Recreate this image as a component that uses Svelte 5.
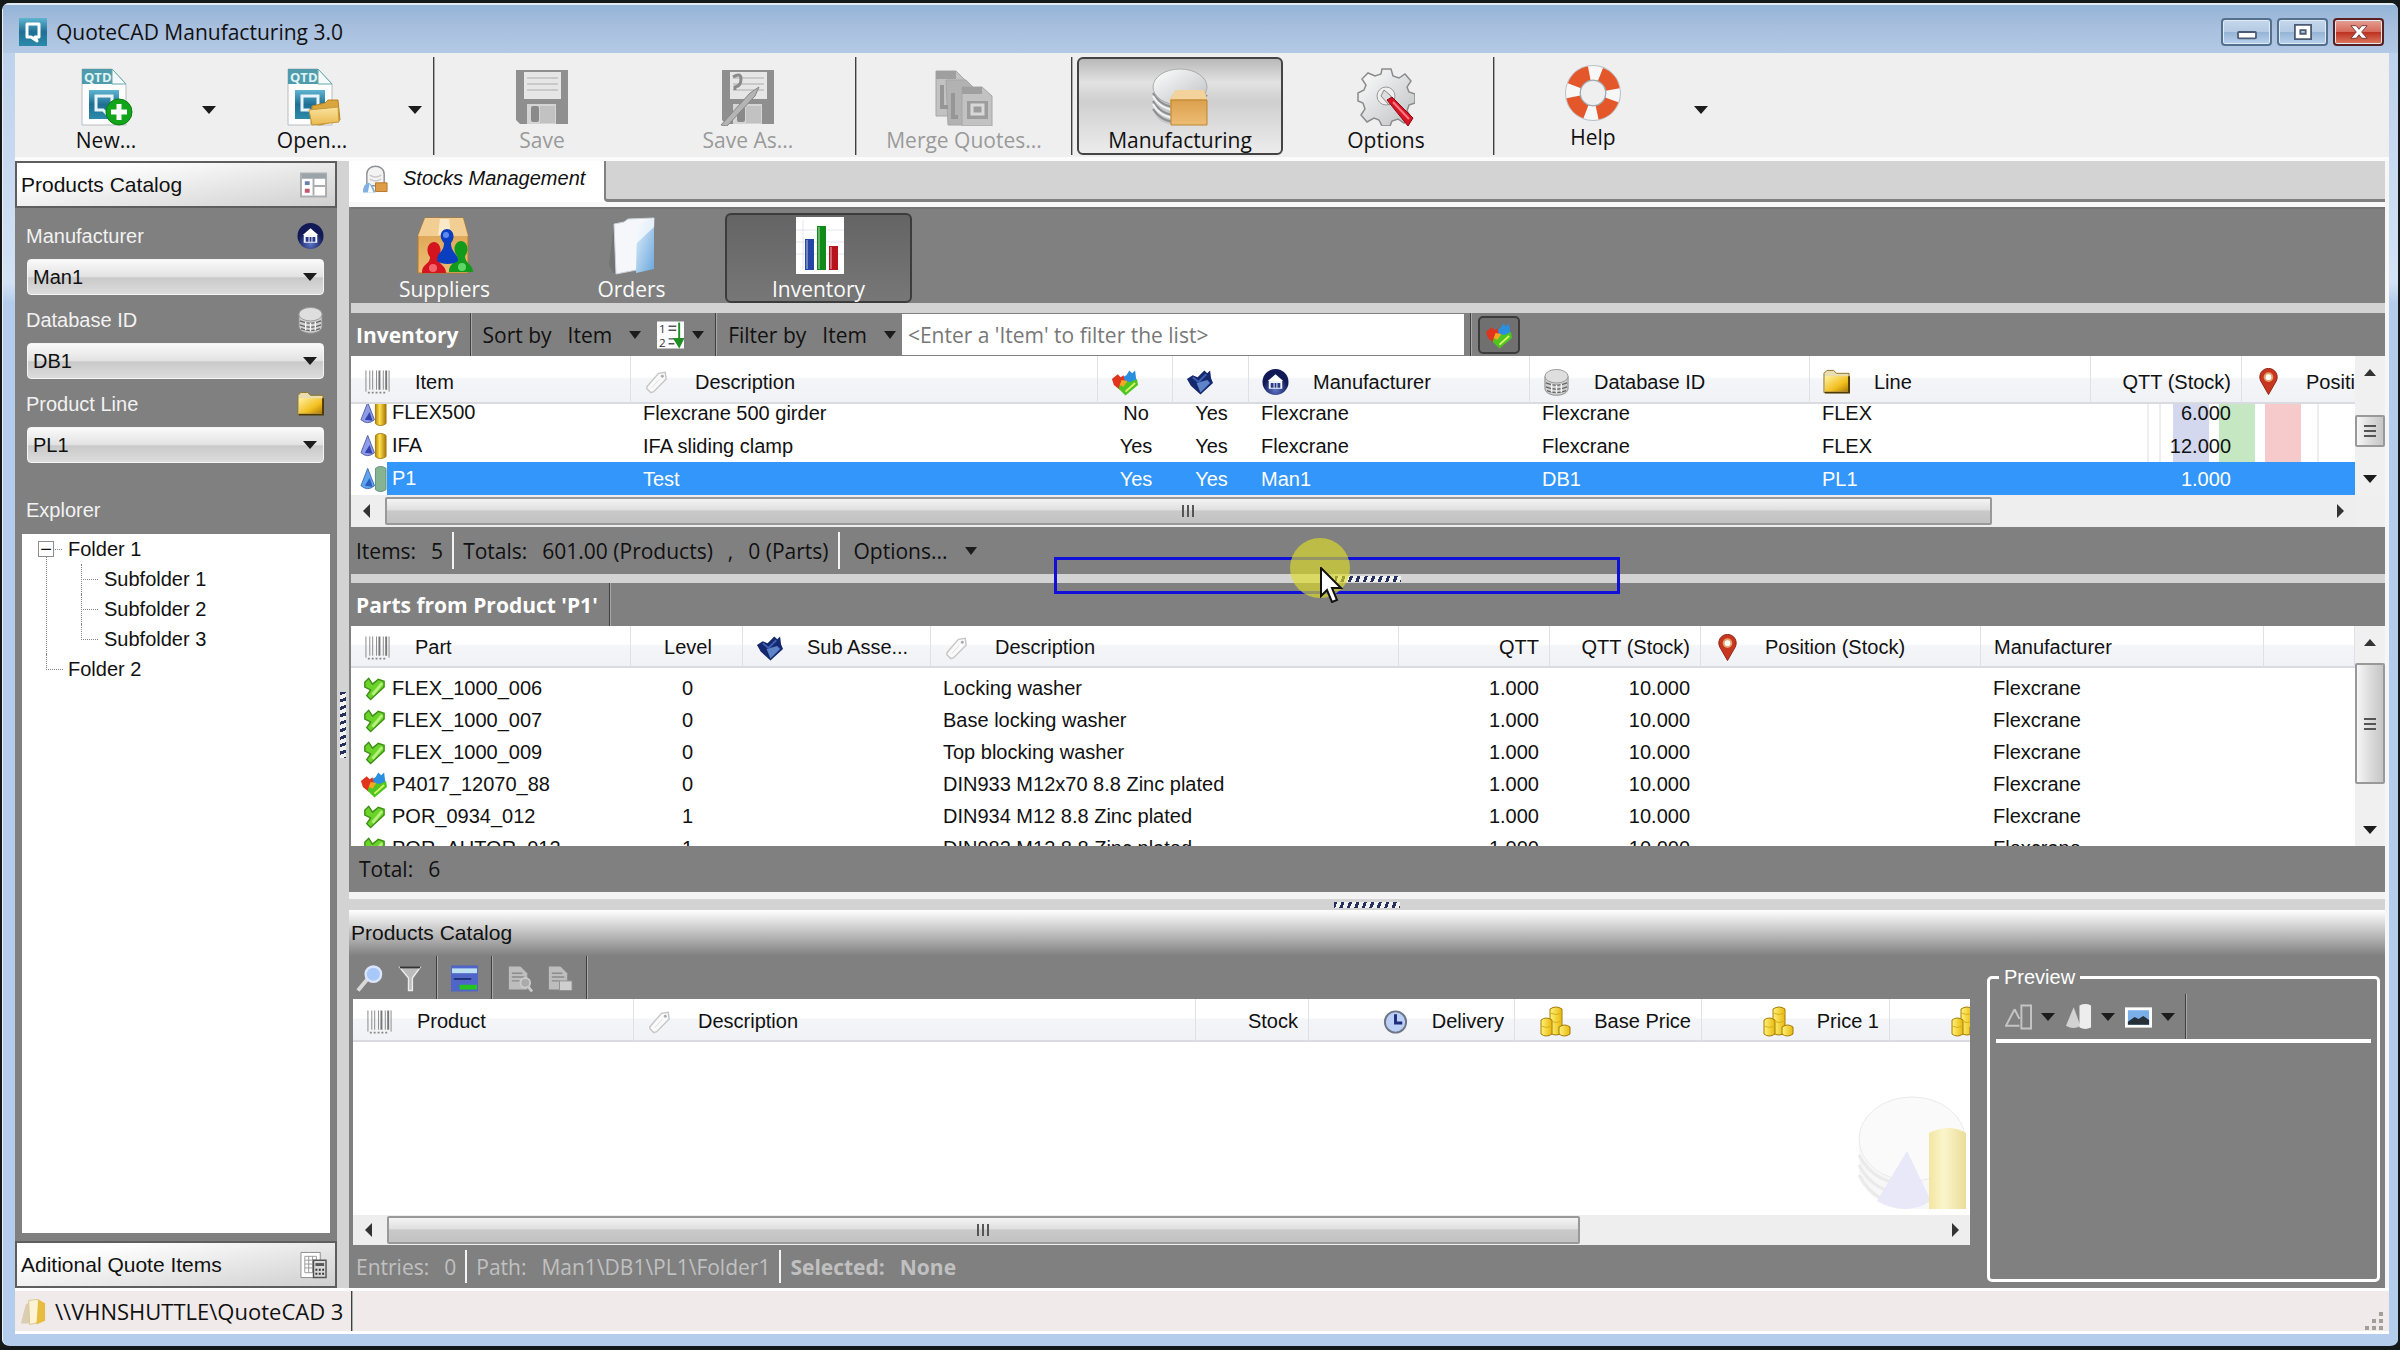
<script>
  import { onMount } from 'svelte';

  let manufacturer = 'Man1';
  let database = 'DB1';
  let productLine = 'PL1';
  let filter = '';
  let inventoryView;

  const fileTools = [
    { label: 'New...', icon: 'new' },
    { label: 'Open...', icon: 'open' }
  ];

  const subfolders = ['Subfolder 1', 'Subfolder 2', 'Subfolder 3'];

  const views = [
    { label: 'Suppliers', icon: 'suppliers' },
    { label: 'Orders', icon: 'orders' },
    { label: 'Inventory', icon: 'chart', active: true }
  ];

  const inventoryCols = [
    { label: 'Item', icon: 'barcode', width: 280 },
    { label: 'Description', icon: 'tag', width: 467 },
    { label: '', icon: 'cubes', width: 75, align: 'center' },
    { label: '', icon: 'blue', width: 76, align: 'center' },
    { label: 'Manufacturer', icon: 'home', width: 281 },
    { label: 'Database ID', icon: 'db', width: 280 },
    { label: 'Line', icon: 'folder', width: 281 },
    { label: 'QTT (Stock)', width: 151, align: 'right' },
    { label: 'Position (Stock)', icon: 'pin', width: 281 }
  ];

  const inventory = [
    ['FLEX500', 'Flexcrane 500 girder', 'No', 'Yes', 'Flexcrane', 'Flexcrane', 'FLEX', '6.000', ''],
    ['IFA', 'IFA sliding clamp', 'Yes', 'Yes', 'Flexcrane', 'Flexcrane', 'FLEX', '12.000', ''],
    ['P1', 'Test', 'Yes', 'Yes', 'Man1', 'DB1', 'PL1', '1.000', '']
  ];

  const partCols = [
    { label: 'Part', icon: 'barcode', width: 280 },
    { label: 'Level', width: 112, align: 'center' },
    { label: 'Sub Asse...', icon: 'blue', width: 188 },
    { label: 'Description', icon: 'tag', width: 468 },
    { label: 'QTT', width: 151, align: 'right' },
    { label: 'QTT (Stock)', width: 151, align: 'right' },
    { label: 'Position (Stock)', icon: 'pin', width: 280 },
    { label: 'Manufacturer', width: 283 },
    { label: '', width: 91 }
  ];

  const parts = [
    ['FLEX_1000_006', '0', 'Locking washer'],
    ['FLEX_1000_007', '0', 'Base locking washer'],
    ['FLEX_1000_009', '0', 'Top blocking washer'],
    ['P4017_12070_88', '0', 'DIN933 M12x70 8.8 Zinc plated'],
    ['POR_0934_012', '1', 'DIN934 M12 8.8 Zinc plated'],
    ['POR_AUTOR_012', '1', 'DIN982 M12 8.8 Zinc plated']
  ].map(([part, level, text]) => [part, level, '', text, '1.000', '10.000', '', 'Flexcrane', '']);

  const catalogCols = [
    { label: 'Product', icon: 'barcode', width: 281 },
    { label: 'Description', icon: 'tag', width: 562 },
    { label: 'Stock', width: 113, align: 'right' },
    { label: 'Delivery', icon: 'clock', width: 206, align: 'right' },
    { label: 'Base Price', icon: 'coins', width: 187, align: 'right' },
    { label: 'Price 1', icon: 'coins', width: 188, align: 'right' },
    { label: 'Price 2', icon: 'coins', width: 188, align: 'right' }
  ];

  const total = (cols) => cols.reduce((sum, c) => sum + c.width, 0);

  onMount(() => {
    inventoryView.scrollTop = inventoryView.scrollHeight;
  });
</script>

{#snippet page()}
  <path d="M5 1h30l14 15v41H5z" fill="#fdfdfd" stroke="#b9bcc0" />
  <path d="M5 1h30l14 15H5z" fill="#4f9bab" />
  <path d="M35 1v15h14z" fill="#f4fafb" stroke="#6aa" />
  <text x="7" y="14" font-size="13" font-weight="bold" fill="#dff3f6">QTD</text>
  <rect x="12" y="22" width="30" height="29" fill="url(#teal)" />
  <path d="M19 28h16v14h-4v5l-5-5h-7z" fill="none" stroke="#e8f4fa" stroke-width="3" />
{/snippet}

{#snippet floppy()}
  <path d="M3 2h52v54H7l-4-4z" fill="#8f8f8f" />
  <rect x="11" y="4" width="37" height="27" fill="#e6e6e6" />
  <path d="M14 10h31M14 16h31M14 22h31" stroke="#c9c9c9" stroke-width="2" />
  <rect x="14" y="36" width="29" height="20" fill="#d4d4d4" />
  <rect x="18" y="38" width="8" height="16" rx="2" fill="#8a8a8a" />
  <rect x="27" y="38" width="15" height="17" fill="#c2c2c2" />
{/snippet}

{#snippet icon(name)}
  {#if name === 'app'}
    <svg class="app-logo" viewBox="0 0 28 28" aria-hidden="true">
      <rect width="28" height="28" fill="url(#teal)" />
      <path d="M8 6h12v13h-4l2 4-6-4H8z" fill="none" stroke="#fff" stroke-width="3" stroke-linejoin="round" />
    </svg>
  {:else if name === 'new'}
    <svg class="big" viewBox="0 0 58 58" aria-hidden="true">
      {@render page()}
      <circle cx="42" cy="44" r="13" fill="#12a51c" stroke="#0a7d13" />
      <path d="M42 36v16M34 44h16" stroke="#fff" stroke-width="5" />
    </svg>
  {:else if name === 'open'}
    <svg class="big" viewBox="0 0 58 58" aria-hidden="true">
      {@render page()}
      <path d="M29 38l13-3 3-3h10l2 20-20 5-9-1z" fill="#d9a53c" stroke="#b98425" />
      <path d="M26 42l29-3 1 15-27 3z" fill="url(#folder)" stroke="#c6993a" />
    </svg>
  {:else if name === 'save'}
    <svg class="big" viewBox="0 0 58 58" aria-hidden="true">{@render floppy()}</svg>
  {:else if name === 'saveas'}
    <svg class="big" viewBox="0 0 58 58" aria-hidden="true">
      {@render floppy()}
      <path d="M14 9q8-5 8 2t-6 8v3" fill="none" stroke="#8a8a8a" stroke-width="3" />
      <path d="M2 57L31 25l9-6-4 9L8 58z" fill="#b4b4b4" stroke="#868686" />
    </svg>
  {:else if name === 'merge'}
    <svg class="big" viewBox="0 0 58 58" aria-hidden="true">
      <g fill="#c2c2c2" stroke="#a6a6a6">
        <path d="M1 3h20l9 9v36H1z" />
        <path d="M11 12h20l9 9v36H13z" fill="#b2b2b2" />
        <path d="M27 19h20l10 9v30H27z" />
      </g>
      <path d="M1 3h20v8H1zM27 19h20v7H27z" fill="#9f9f9f" />
      <path d="M7 17v22h6M18 25v24h5" fill="none" stroke="#969696" stroke-width="4" />
      <path d="M32 33h21v18H32z" fill="#9c9c9c" />
      <path d="M37 37h11v9H37z" fill="none" stroke="#d8d8d8" stroke-width="3" />
    </svg>
  {:else if name === 'stock'}
    <svg class="big" viewBox="0 0 58 58" aria-hidden="true">
      <path d="M3 18v25c2 9 11 14 24 14s27-4 28-12V17z" fill="#c3c5c6" />
      <path d="M2 25q8 15 27 14t27-12M2 33q8 15 27 14M2 41q9 14 27 13" fill="none" stroke="#8b8f91" stroke-width="2" />
      <path d="M2 28q8 15 27 14M2 36q8 15 27 14" fill="none" stroke="#f4f4f4" stroke-width="2" />
      <ellipse cx="29" cy="19" rx="27" ry="18" fill="url(#silver)" stroke="#a8acad" />
      <path d="M19 31l6-9h28l3 9v26H20z" fill="#e5b66c" />
      <path d="M20 32h36v25H20z" fill="url(#box)" stroke="#bd8530" />
      <path d="M19 31l6-9h28l3 9z" fill="#f3d29c" />
    </svg>
  {:else if name === 'clerk'}
    <svg class="small" viewBox="0 0 28 28" aria-hidden="true">
      <path d="M5 21V9c0-11 18-11 18 0v12z" fill="#f3f3f3" stroke="#8d9094" stroke-width="1.500" />
      <path d="M8 10q6 4 12 0M8 14q6 4 12 0" fill="none" stroke="#c8cacc" stroke-width="1.500" />
      <path d="M1 28q0-9 6-10l4 3 3 7z" fill="#7fb0e3" />
      <path d="M8 19l4 9h-6z" fill="#fff" />
      <path d="M14 18h12v9H14z" fill="#dd9c45" stroke="#b5772a" />
    </svg>
  {:else if name === 'gear'}
    <svg class="big" viewBox="0 0 58 58" aria-hidden="true">
      <path d="M25 1h9l2 7 6 2 6-4 6 7-4 6 2 5 6 2v9l-6 2-2 6 4 6-7 6-6-4-6 2-2 5h-8l-3-6-5-2-7 4-6-7 4-6-2-6-5-2v-8l6-3 2-5-4-6 6-6 7 3 6-2z" fill="url(#silver)" stroke="#8b8b8b" stroke-width="1.5" />
      <circle cx="29" cy="28" r="9" fill="#efefef" stroke="#999" />
      <path d="M27 22l6 5 5 7-6 3-8-9z" fill="#ddd" stroke="#888" />
      <path d="M30 32l5-3 21 21-5 8z" fill="#d81525" stroke="#8e0813" />
      <path d="M36 34l16 17" stroke="#f77b83" stroke-width="2" />
    </svg>
  {:else if name === 'help'}
    <svg class="big" viewBox="0 0 58 58" aria-hidden="true">
      <circle cx="29" cy="28" r="20" fill="none" stroke="#b9c0c6" stroke-width="16" />
      <circle cx="29" cy="28" r="20" fill="none" stroke="#f7f7f7" stroke-width="14" />
      <circle cx="29" cy="28" r="20" fill="none" stroke="#e4572a" stroke-width="14" stroke-dasharray="20 11.4" stroke-dashoffset="-7" />
      <circle cx="29" cy="28" r="13" fill="none" stroke="#9aa7b0" />
    </svg>
  {:else if name === 'suppliers'}
    <svg class="big" viewBox="0 0 58 58" aria-hidden="true">
      <path d="M2 19L9 1h38l5 18v37H2z" fill="url(#box)" stroke="#b27a2a" />
      <path d="M2 19L9 1h38l5 18z" fill="#f2ce93" />
      <path d="M24 2h9l2 16H22z" fill="#fae9c8" />
      <path d="M6 56c0-10 8-8 8-16-5-6-2-15 4-15s9 9 4 15c0 8 8 8 8 16z" fill="#d4141f" />
      <path d="M33 55c0-10 8-8 8-16-5-6-2-15 4-15s9 9 4 15c0 8 8 8 8 16z" fill="#129a1d" />
      <path d="M21 44c0-10 7-8 7-18-6-6-3-14 3-14s9 8 4 14c0 10 7 10 7 18-5 4-16 4-21 0z" fill="#0c3fc0" />
      <circle cx="30" cy="18" r="3" fill="#5f8cf0" />
      <circle cx="17" cy="51" r="4" fill="#f2656c" />
      <circle cx="46" cy="50" r="4" fill="#5fd767" />
    </svg>
  {:else if name === 'orders'}
    <svg class="big" viewBox="0 0 58 58" aria-hidden="true">
      <path d="M10 56l-4-8 5-42 14-1 5 4-5 46z" fill="#666" opacity=".5" />
      <path d="M11 7l10-2 4-3 26-1-2 49-36 7z" fill="#f5f7fa" stroke="#cbd2da" />
      <path d="M34 9l17-8v51l-18 4z" fill="url(#sky)" />
      <path d="M34 9l17-8v9L33 27z" fill="#fff" opacity=".7" />
    </svg>
  {:else if name === 'chart'}
    <svg class="big" viewBox="0 0 58 58" aria-hidden="true">
      <rect x="6" width="48" height="57" fill="#fff" />
      <path d="M13 3v50M6 13h48M6 25h48M6 37h48" stroke="#e3e3ee" />
      <rect x="15" y="22" width="9" height="31" fill="#2545a6" />
      <rect x="27" y="9" width="9" height="44" fill="#118a19" />
      <rect x="39" y="29" width="9" height="24" fill="#b7131d" />
      <path d="M17 23v29M29 10v42M41 30v22" stroke="#fff" stroke-width="2" opacity=".35" />
    </svg>
  {:else if name === 'barcode'}
    <svg class="small" viewBox="0 0 28 28" aria-hidden="true">
      <path d="M2 2v22M6 2v20M9 2v20M13 2v20M20 2v20M26 2v22" stroke="#888" stroke-width="1" />
      <path d="M16 2v20M23 2v20" stroke="#777" stroke-width="2" />
      <path d="M4 25h20" stroke="#888" stroke-width="2" stroke-dasharray="2 2" />
    </svg>
  {:else if name === 'tag'}
    <svg class="small" viewBox="0 0 28 28" aria-hidden="true">
      <path d="M3 19L15 5l7-1 1 7-13 13-3 1-4-4z" fill="#fafafa" stroke="#c6c6c6" stroke-width="1.5" />
      <circle cx="19" cy="8" r="1.500" fill="#aaa" />
      <path d="M8 20l8-9" stroke="#ddd" />
    </svg>
  {:else if name === 'cubes'}
    <svg class="small" viewBox="0 0 28 28" aria-hidden="true">
      <path d="M12 9l4-2 3-5 3 3 3-3 1 8 1 5-8 2-5-4z" fill="#2b8fe0" />
      <path d="M1 11l6-5 3 3 3-2 2 9-6 6L3 17z" fill="#e0341d" />
      <path d="M9 17l6-4 5 1 7-3 1 6-13 11-7-7z" fill="#4fc51f" />
      <path d="M11 12l6 1-4 6-4-2z" fill="#f5a623" />
      <path d="M15 24l10-9" stroke="#d6f36a" stroke-width="2" />
    </svg>
  {:else if name === 'blue'}
    <svg class="small" viewBox="0 0 28 28" aria-hidden="true">
      <path d="M1 11l6-4 5 2 7-7 3 3 3-3 1 8 2 5-13 12L5 18z" fill="#14286e" />
      <path d="M11 15l11-3 3 3-10 10z" fill="#5d83c8" />
      <path d="M7 9l6 5 8-8" fill="none" stroke="#3d5fb4" stroke-width="2" />
    </svg>
  {:else if name === 'home'}
    <svg class="small" viewBox="0 0 28 28" aria-hidden="true">
      <circle cx="14" cy="14" r="13.500" fill="url(#navy)" />
      <path d="M6 13l8-7 8 7z" fill="#fff" />
      <path d="M7 13h14v8H7z" fill="#f3f6ff" />
      <path d="M9 20v-5h3v5zM13 20v-5h2v5zM16 20v-5h3v5z" fill="#2a3a86" />
    </svg>
  {:else if name === 'db'}
    <svg class="small" viewBox="0 0 28 28" aria-hidden="true">
      <path d="M2 8v13c1 9 23 9 24 0V8z" fill="#cfcfcf" stroke="#8a8a8a" />
      <path d="M3 15q11 5 22 0M3 19q11 5 22 0M4 23q10 4 20 0" fill="none" stroke="#666" stroke-width="1.500" />
      <path d="M9 16v9M14 17v9M19 16v9" stroke="#f4f4f4" stroke-width="1.500" />
      <ellipse cx="14" cy="8" rx="12" ry="7" fill="#dedede" stroke="#999" />
    </svg>
  {:else if name === 'folder'}
    <svg class="small" viewBox="0 0 28 28" aria-hidden="true">
      <path d="M1 5l3-3h7l3 3h13v20H1z" fill="#e9dcae" stroke="#8d7327" />
      <path d="M2 8h25v16H2z" fill="url(#gold)" />
      <path d="M27 8v17H2" fill="none" stroke="#4d3a07" stroke-width="2" />
    </svg>
  {:else if name === 'pin'}
    <svg class="small" viewBox="0 0 28 28" aria-hidden="true">
      <path d="M14 27L6 13a9 9 0 1 1 16 0z" fill="#c9361f" stroke="#8d2213" />
      <circle cx="14" cy="9" r="4" fill="#fff" stroke="#e2a26a" stroke-width="2" />
    </svg>
  {:else if name === 'clock'}
    <svg class="small" viewBox="0 0 28 28" aria-hidden="true">
      <circle cx="14" cy="14" r="11" fill="#bcd0f7" stroke="#6e7687" stroke-width="2" />
      <path d="M14 6v9h7" fill="none" stroke="#1d2d7a" stroke-width="3" />
    </svg>
  {:else if name === 'coins'}
    <svg class="small coins" viewBox="0 0 31 31" aria-hidden="true">
      <g fill="url(#coin)" stroke="#a47a05">
        <path d="M10 3q6-4 12 0v24q-6 4-12 0z" />
        <path d="M1 14q5-4 11 0v14q-6 4-11 0z" />
        <path d="M19 21q6-4 11 0v7q-6 4-11 0z" />
      </g>
      <path d="M10 7q6 3 12 0M10 15q6 3 12 0M1 20q5 3 11 0" fill="none" stroke="#d9ae1c" />
    </svg>
  {:else if name === 'product'}
    <svg class="small" viewBox="0 0 28 28" aria-hidden="true">
      <path d="M8 3l7 18q-7 6-14 0z" fill="#8f9ce8" stroke="#5560a5" />
      <path d="M5 21l5-8 3 9z" fill="#3543ac" />
      <path d="M16 3q5-4 11 0v22q-6 4-11 0z" fill="url(#brass)" stroke="#a67a09" />
    </svg>
  {:else if name === 'product-selected'}
    <svg class="small" viewBox="0 0 28 28" aria-hidden="true">
      <path d="M8 3l7 18q-7 6-14 0z" fill="#5fa4ee" stroke="#3f6fb5" />
      <path d="M5 21l5-8 3 9z" fill="#2a5cbc" />
      <path d="M16 3q5-4 11 0v22q-6 4-11 0z" fill="#86b493" stroke="#5d8f7c" />
    </svg>
  {:else if name === 'part'}
    <svg class="small" viewBox="0 0 28 28" aria-hidden="true">
      <path d="M5 8l4-4 4 6 6-5 6 2v6L11 26l-4-4 4-6-6-3z" fill="#6bd42a" stroke="#3f8f16" stroke-width="1.500" />
      <path d="M13 21L23 9" stroke="#b4f07a" stroke-width="3" />
    </svg>
  {:else if name === 'form'}
    <svg class="small" viewBox="0 0 28 28" aria-hidden="true">
      <path d="M1 2h26v24H1z" fill="#fff" stroke="#a9adb0" stroke-width="2" />
      <path d="M2 5h25" stroke="#9aa3a7" stroke-width="5" />
      <path d="M14 7v18M14 15h12" stroke="#a9adb0" stroke-width="2" />
      <path d="M5 10h5v4H5z" fill="#6b7fae" />
      <path d="M5 18h5v4H5z" fill="#c0566b" />
    </svg>
  {:else if name === 'calc'}
    <svg class="small" viewBox="0 0 28 28" aria-hidden="true">
      <path d="M1 1h20v26H1z" fill="#fff" stroke="#8b8b8b" />
      <path d="M5 5h12v17H5zM5 9h12M5 13h12M5 17h12M9 5v17M13 5v17" fill="none" stroke="#999" />
      <path d="M14 9h13v18H14z" fill="#d8d8d8" stroke="#555" stroke-width="1.500" />
      <path d="M16 12h9v3h-9z" fill="#555" />
      <path d="M16 19h9M16 23h9" stroke="#333" stroke-width="2" stroke-dasharray="2 1.500" />
    </svg>
  {:else if name === 'numbers'}
    <svg class="small" viewBox="0 0 28 28" aria-hidden="true">
      <rect width="28" height="28" fill="#fdfdff" />
      <text x="2" y="12" font-size="12" fill="#333">1</text>
      <text x="2" y="26" font-size="12" fill="#333">2</text>
      <path d="M12 5h8M12 9h8M12 18h6M12 23h6" stroke="#555" stroke-width="1.500" />
      <path d="M23 1v24M18 18l5 8 4-8z" stroke="#1f8f25" stroke-width="2" fill="#1f8f25" />
    </svg>
  {:else if name === 'search'}
    <svg class="small" viewBox="0 0 28 28" aria-hidden="true">
      <path d="M2 27l10-12" stroke="#d9d9d9" stroke-width="4" />
      <circle cx="18" cy="10" r="8" fill="#a9c8fa" stroke="#dbe6fb" stroke-width="2.500" />
    </svg>
  {:else if name === 'funnel'}
    <svg class="small" viewBox="0 0 28 28" aria-hidden="true">
      <path d="M4 3h21l-8 11v13h-4V14z" fill="#bbb" stroke="#ececec" stroke-width="1.500" />
      <path d="M4 3h21" stroke="#333" stroke-width="2" />
    </svg>
  {:else if name === 'list'}
    <svg class="small" viewBox="0 0 28 28" aria-hidden="true">
      <rect y="1" width="28" height="27" fill="#4f66c8" />
      <path d="M1 4h26v5H1z" fill="#bfe0f2" />
      <path d="M3 15h18" stroke="#22307a" stroke-width="2" />
      <path d="M9 21h18v5H9z" fill="#27c41f" />
    </svg>
  {:else if name === 'doc' || name === 'docs'}
    <svg class="small" viewBox="0 0 28 28" aria-hidden="true">
      <path d="M3 2h12l7 7v17H3z" fill="#bdbdbd" />
      <path d="M6 9h11M6 13h13M6 17h8" stroke="#8b8b8b" stroke-width="1.500" />
      {#if name === 'doc'}
        <circle cx="20" cy="19" r="5" fill="#aaa" stroke="#c9c9c9" stroke-width="2" />
        <path d="M23 23l4 5" stroke="#c9c9c9" stroke-width="3" />
      {:else}
        <path d="M14 17h13v10H14z" fill="#cfcfcf" stroke="#909090" />
      {/if}
    </svg>
  {:else if name === 'wire'}
    <svg class="small" viewBox="0 0 28 28" aria-hidden="true">
      <path d="M10 6L1 23h14M10 6l5 10M17 2h10v24H17z" fill="none" stroke="#c4c4c4" stroke-width="2" />
    </svg>
  {:else if name === 'solid'}
    <svg class="small" viewBox="0 0 28 28" aria-hidden="true">
      <path d="M9 4l7 19q-7 5-15 0z" fill="#d2d2d2" />
      <path d="M15 2q6-3 12 0v23q-6 3-12 0z" fill="#ededed" />
    </svg>
  {:else if name === 'image'}
    <svg class="small" viewBox="0 0 28 28" aria-hidden="true">
      <path d="M0 4h28v21H0z" fill="#fff" />
      <path d="M3 7h22v15H3z" fill="#79aee8" />
      <path d="M3 19l7-5 4 2 5-3 6 4v5H3z" fill="#26303a" />
    </svg>
  {:else if name === 'share'}
    <svg class="small" viewBox="0 0 28 28" aria-hidden="true">
      <path d="M1 27l5-20 8-3v23z" fill="#c4b07b" opacity=".5" />
      <path d="M9 3l10-1v24l-9 2z" fill="#fbf3d3" stroke="#d9c88e" />
      <path d="M19 2l7 4v18l-9 4z" fill="#e8bc3e" />
    </svg>
  {/if}
{/snippet}

{#snippet head(cols)}
  <colgroup>
    {#each cols as col}
      <col style="width: {col.width}px" />
    {/each}
  </colgroup>
  <thead>
    <tr>
      {#each cols as col}
        <th>
          <div class="th {col.align || ''}" class:lone={!col.label}>
            {#if col.icon}{@render icon(col.icon)}{/if}
            {#if col.label}<span>{col.label}</span>{/if}
          </div>
        </th>
      {/each}
    </tr>
  </thead>
{/snippet}

{#snippet hscroll(before, thumb, after)}
  <div class="hscroll">
    <button class="step" aria-label="Scroll left"><i class="tri left"></i></button>
    <div class="track" style="grid-template-columns: {before}fr {thumb}fr {after}fr">
      <div class="thumb"><i></i><i></i><i></i></div>
    </div>
    <button class="step" aria-label="Scroll right"><i class="tri right"></i></button>
  </div>
{/snippet}

{#snippet vscroll(before, thumb, after)}
  <div class="vscroll">
    <button class="step" aria-label="Scroll up"><i class="tri up"></i></button>
    <div class="track" style="grid-template-rows: {before}fr {thumb}fr {after}fr">
      <div class="thumb"><i></i><i></i><i></i></div>
    </div>
    <button class="step" aria-label="Scroll down"><i class="tri down"></i></button>
  </div>
{/snippet}

<svg width="0" height="0" class="defs" aria-hidden="true">
  <defs>
    <linearGradient id="teal" x2="0" y2="1"><stop stop-color="#5fb5d0" /><stop offset=".5" stop-color="#1f6f94" /><stop offset="1" stop-color="#2b8bab" /></linearGradient>
    <linearGradient id="folder" x2="0" y2="1"><stop stop-color="#fbe3a0" /><stop offset="1" stop-color="#e9b94e" /></linearGradient>
    <linearGradient id="gold" x2="1" y2="1"><stop stop-color="#fff0a0" /><stop offset=".6" stop-color="#f2bf1f" /><stop offset="1" stop-color="#a87606" /></linearGradient>
    <linearGradient id="silver" x2="1" y2="1"><stop stop-color="#ffffff" /><stop offset="1" stop-color="#bcbfc1" /></linearGradient>
    <linearGradient id="box" x2="0" y2="1"><stop stop-color="#dba04d" /><stop offset="1" stop-color="#edbd74" /></linearGradient>
    <linearGradient id="sky" x2="1" y2="1"><stop stop-color="#e4f2fd" /><stop offset="1" stop-color="#6ba7dc" /></linearGradient>
    <linearGradient id="brass"><stop stop-color="#b98707" /><stop offset=".4" stop-color="#ffe14d" /><stop offset="1" stop-color="#a87606" /></linearGradient>
    <linearGradient id="pale"><stop stop-color="#f3e6a0" /><stop offset=".4" stop-color="#fbf5cc" /><stop offset="1" stop-color="#ecdc98" /></linearGradient>
    <linearGradient id="coin"><stop stop-color="#fff27a" /><stop offset="1" stop-color="#e8b90c" /></linearGradient>
    <radialGradient id="navy" cy=".8"><stop stop-color="#5d74c8" /><stop offset="1" stop-color="#111a56" /></radialGradient>
  </defs>
</svg>

<div class="window">
  <header class="titlebar">
    {@render icon('app')}
    <h1>QuoteCAD Manufacturing 3.0</h1>
    <div class="controls">
      <button aria-label="Minimize"><svg viewBox="0 0 24 20"><rect x="2" y="10" width="20" height="7" rx="1" fill="#fff" stroke="#4b5b73" stroke-width="2" /></svg></button>
      <button aria-label="Maximize"><svg viewBox="0 0 24 20"><path d="M3 2h18v16H3zM9 8h6v4H9z" fill="#fff" fill-rule="evenodd" stroke="#4b5b73" stroke-width="2" /></svg></button>
      <button class="close" aria-label="Close"><svg viewBox="0 0 24 20"><path d="M3 3h6l3 4 3-4h6l-6 7 6 7h-6l-3-4-3 4H3l6-7z" fill="#fff" stroke="#6d3434" /></svg></button>
    </div>
  </header>

  <div class="client">
    <nav class="toolbar">
      {#each fileTools as tool}
        <button class="tool file">{@render icon(tool.icon)}<span>{tool.label}</span></button>
        <button class="drop" aria-label="{tool.label} menu"><i class="tri down"></i></button>
      {/each}
      <span class="sep"></span>
      <button class="tool" disabled>{@render icon('save')}<span>Save</span></button>
      <button class="tool" disabled>{@render icon('saveas')}<span>Save As...</span></button>
      <span class="sep"></span>
      <button class="tool" disabled>{@render icon('merge')}<span>Merge Quotes...</span></button>
      <span class="sep"></span>
      <button class="tool active">{@render icon('stock')}<span>Manufacturing</span></button>
      <button class="tool">{@render icon('gear')}<span>Options</span></button>
      <span class="sep"></span>
      <button class="tool help">{@render icon('help')}<span>Help</span></button>
      <button class="drop" aria-label="Help menu"><i class="tri down"></i></button>
    </nav>

    <div class="body">
      <aside class="sidebar">
        <button class="panel-title">Products Catalog {@render icon('form')}</button>
        <div class="fields">
          <div class="field">
            <label for="manufacturer">Manufacturer {@render icon('home')}</label>
            <div class="combo"><select id="manufacturer" bind:value={manufacturer}><option>Man1</option></select><i class="tri down"></i></div>
          </div>
          <div class="field">
            <label for="database">Database ID {@render icon('db')}</label>
            <div class="combo"><select id="database" bind:value={database}><option>DB1</option></select><i class="tri down"></i></div>
          </div>
          <div class="field">
            <label for="line">Product Line {@render icon('folder')}</label>
            <div class="combo"><select id="line" bind:value={productLine}><option>PL1</option></select><i class="tri down"></i></div>
          </div>
          <h2>Explorer</h2>
        </div>
        <div class="tree">
          <ul>
            <li>
              <span class="node"><button class="toggle" aria-label="Collapse Folder 1">−</button>Folder 1</span>
              <ul>
                {#each subfolders as name}
                  <li><span class="node">{name}</span></li>
                {/each}
              </ul>
            </li>
            <li><span class="node">Folder 2</span></li>
          </ul>
        </div>
        <button class="panel-title">Aditional Quote Items {@render icon('calc')}</button>
      </aside>

      <div class="vsplit"><span class="grip"></span></div>

      <main>
        <div class="tabs">
          <button class="tab">{@render icon('clerk')}Stocks Management</button>
          <span class="tab-rest"></span>
        </div>

        <section class="stocks">
          <div class="views">
            {#each views as view}
              <button class="view" class:active={view.active}>{@render icon(view.icon)}<span>{view.label}</span></button>
            {/each}
          </div>
          <div class="hsplit"></div>

          <div class="bar">
            <strong>Inventory</strong>
            <span class="sep"></span>
            <span>Sort by</span>
            <button class="menu">Item <i class="tri down"></i></button>
            <button class="menu numbers" aria-label="Sort order">{@render icon('numbers')}<i class="tri down"></i></button>
            <span class="sep"></span>
            <span>Filter by</span>
            <div class="filter">
              <button class="menu">Item <i class="tri down"></i></button>
              <input type="text" aria-label="Filter" placeholder="<Enter a 'Item' to filter the list>" bind:value={filter} />
              <span class="sep"></span>
              <button class="only-parts" aria-label="Toggle sub assemblies">{@render icon('cubes')}</button>
            </div>
          </div>

          <div class="grid-row">
            <div class="grid inventory" bind:this={inventoryView}>
              <table style="width: {total(inventoryCols)}px">
                {@render head(inventoryCols)}
                <tbody>
                  {#each inventory as row}
                    <tr class:selected={row[0] === 'P1'}>
                      {#each row as cell, i}
                        {#if i === 0}
                          <td class="name"><div>{@render icon(cell === 'P1' ? 'product-selected' : 'product')}<span>{cell}</span></div></td>
                        {:else}
                          <td class={inventoryCols[i].align}>{cell}</td>
                        {/if}
                      {/each}
                    </tr>
                  {/each}
                </tbody>
              </table>
            </div>
            <svg class="chart-mark" viewBox="0 0 172 58" aria-hidden="true">
              <path d="M1 0v58M13 0v58M171 0v58" stroke="#dcdce4" />
              <path d="M26 0h36v58H26z" fill="#d3d8ef" />
              <path d="M72 0h36v58H72z" fill="#c5e8c2" />
              <path d="M118 0h36v58h-36z" fill="#f6caca" />
            </svg>
            {@render vscroll(36, 42, 22)}
          </div>
          <div class="scroll-row">{@render hscroll(0, 83, 17)}<span class="corner"></span></div>

          <div class="bar status">
            <span class="pair">Items: <span>5</span></span>
            <span class="sep white"></span>
            <span class="pair">Totals: <span>601.00 (Products)</span> <span>,</span> <span>0 (Parts)</span></span>
            <span class="sep white"></span>
            <button class="menu">Options... <i class="tri down"></i></button>
          </div>

          <div class="hsplit moving">
            <span class="grip"></span>
            <div class="drag-frame"></div>
            <div class="halo"></div>
            <svg class="cursor" viewBox="0 0 24 36" aria-hidden="true"><path d="M1 1v28l6-6 5 12 5-2-5-12h9z" fill="#fff" stroke="#111" stroke-width="2" /></svg>
          </div>

          <div class="bar">
            <strong>Parts from Product 'P1'</strong>
            <span class="sep"></span>
          </div>
          <div class="grid-row">
            <div class="grid parts">
              <table style="width: {total(partCols)}px">
                {@render head(partCols)}
                <tbody>
                  {#each parts as row}
                    <tr>
                      {#each row as cell, i}
                        {#if i === 0}
                          <td class="name"><div>{@render icon(cell.startsWith('P4') ? 'cubes' : 'part')}<span>{cell}</span></div></td>
                        {:else}
                          <td class={partCols[i].align}>{cell}</td>
                        {/if}
                      {/each}
                    </tr>
                  {/each}
                </tbody>
              </table>
            </div>
            {@render vscroll(3, 78, 19)}
          </div>
          <div class="bar total"><span class="pair">Total: <span>6</span></span></div>
        </section>

        <div class="hsplit lower"><span class="grip"></span></div>

        <section class="catalog">
          <h2>Products Catalog</h2>
          <div class="catalog-body">
            <div class="listing">
              <div class="icons">
                <button aria-label="Search">{@render icon('search')}</button>
                <button aria-label="Filter">{@render icon('funnel')}</button>
                <span class="sep"></span>
                <button aria-label="List view">{@render icon('list')}</button>
                <span class="sep"></span>
                <button aria-label="View document" disabled>{@render icon('doc')}</button>
                <button aria-label="Print document" disabled>{@render icon('docs')}</button>
                <span class="sep"></span>
              </div>
              <div class="grid products">
                <table style="width: {total(catalogCols)}px">
                  {@render head(catalogCols)}
                </table>
                <svg class="mark" viewBox="0 0 110 116" aria-hidden="true">
                  <g opacity=".3">
                    <path d="M2 40v42q12 32 60 32 40 0 46-20V36z" fill="#e6e6e6" />
                    <path d="M2 60q16 32 60 30M2 70q16 32 60 30M2 80q16 30 50 30" fill="none" stroke="#bbb" stroke-width="3" />
                    <ellipse cx="55" cy="44" rx="53" ry="42" fill="#f1f1f1" stroke="#bbb" />
                    <path d="M50 56l24 50q-26 16-54 0z" fill="#b4b4ee" />
                  </g>
                  <path d="M72 38q20-10 37 0v76H72z" fill="url(#pale)" />
                </svg>
              </div>
              {@render hscroll(0, 77, 23)}
              <div class="bar faded">
                <span class="pair">Entries: <span>0</span></span>
                <span class="sep white"></span>
                <span class="pair">Path: <span>Man1\DB1\PL1\Folder1</span></span>
                <span class="sep white"></span>
                <b class="pair">Selected: <span>None</span></b>
              </div>
            </div>
            <fieldset>
              <legend>Preview</legend>
              <div class="preview-tools">
                <button aria-label="Wireframe">{@render icon('wire')}<i class="tri down"></i></button>
                <button aria-label="Solid">{@render icon('solid')}<i class="tri down"></i></button>
                <button aria-label="Picture">{@render icon('image')}<i class="tri down"></i></button>
                <span class="sep"></span>
              </div>
            </fieldset>
          </div>
        </section>
      </main>
    </div>

    <footer>
      {@render icon('share')}
      <span>\\VHNSHUTTLE\QuoteCAD 3</span>
      <span class="sep"></span>
      <svg class="resize" viewBox="0 0 20 20" aria-hidden="true"><path d="M15 1h4v4h-4zM8 8h4v4H8zM15 8h4v4h-4zM1 15h4v4H1zM8 15h4v4H8zM15 15h4v4h-4z" fill="#a59d98" /></svg>
    </footer>
  </div>
</div>

<style>
  :global(body) {
    background: #16191a;
  }

  .window {
    box-sizing: border-box;
    height: 100vh;
    display: flex;
    flex-direction: column;
    padding: 0 9px 12px 13px;
    border: 2px solid #16191a;
    border-top-width: 3px;
    border-bottom-width: 4px;
    border-radius: 10px;
    background: linear-gradient(#b9cfea, #d3e2f5 280px, #b4cdec 300px);
    box-shadow: inset 0 2px #eef3f8, inset 1px 0 #eef3f8;
    font: 20px "Liberation Sans", Arial, sans-serif;
    color: #111;
    overflow: hidden;
  }

  .defs {
    position: absolute;
  }

  button, select, input {
    font: inherit;
    color: inherit;
    margin: 0;
    padding: 0;
    border: 0;
    background: none;
    border-radius: 0;
  }

  h1, h2 {
    margin: 0;
    font-weight: normal;
  }

  svg {
    display: block;
    flex: none;
  }

  .big {
    width: 58px;
    height: 58px;
  }

  .small {
    width: 27px;
    height: 28px;
  }

  .coins {
    width: 31px;
    height: 31px;
  }

  .tri {
    display: inline-block;
    flex: none;
    border: 7px solid transparent;
  }

  .tri.down {
    border-top: 8px solid #1c1c1c;
    border-bottom: 0;
  }

  .tri.up {
    border-width: 0 6px 7px;
    border-bottom-color: #333;
  }

  .tri.left {
    border-width: 7px 7px 7px 0;
    border-right-color: #333;
  }

  .tri.right {
    border-width: 7px 0 7px 7px;
    border-left-color: #333;
  }

  .sep {
    width: 1px;
    flex: none;
    align-self: stretch;
    background: #3f3f3f;
    border-right: 1px solid #aaa;
  }

  .sep.white {
    margin: 5px 0;
    width: 2px;
    background: #f4f4f4;
    border: 0;
  }

  .titlebar {
    display: flex;
    align-items: center;
    gap: 9px;
    height: 50px;
    padding: 8px 4px 0 16px;
    margin: 0 -9px 0 -12px;
    box-sizing: border-box;
    background: linear-gradient(#92b4d6, #a9bfde 50%, #b2cae5);
    box-shadow: inset 0 2px #e3ebf3;
  }

  .app-logo {
    width: 28px;
    height: 28px;
  }

  .titlebar h1, .toolbar, .views, .bar, footer {
    font: 21px/28px "Open Sans", "Noto Sans", sans-serif;
  }

  .titlebar h1 {
    flex: 1;
  }

  footer {
    font-size: 22px;
  }

  .controls {
    display: flex;
    gap: 5px;
    padding-right: 10px;
  }

  .controls button {
    display: grid;
    place-items: center;
    width: 51px;
    height: 28px;
    border: 2px solid #53708f;
    border-radius: 4px;
    background: linear-gradient(#c5d8ec, #b4cae3 50%, #96b4d6 52%, #b9d2ee);
    box-shadow: inset 0 0 0 1px #e0ebf6;
  }

  .controls svg {
    width: 22px;
    height: 18px;
  }

  .controls .close {
    border-color: #5b1f20;
    background: linear-gradient(#e5a194, #d6695a 50%, #bd3322 52%, #de7a5f);
  }

  .client {
    flex: 1;
    min-height: 0;
    display: flex;
    flex-direction: column;
    background: #fff;
  }

  .toolbar {
    display: flex;
    box-sizing: border-box;
    height: 108px;
    padding: 4px 2px 2px;
    background: #efefef;
    border-bottom: 4px solid #fbfbfb;
  }

  .toolbar .sep {
    margin: 0 4px;
  }

  .tool {
    box-sizing: border-box;
    width: 206px;
    display: flex;
    flex-direction: column;
    align-items: center;
    padding-top: 9px;
    border: 2px solid transparent;
  }

  .tool.file {
    width: 178px;
  }

  .tool.help {
    width: 188px;
    padding-top: 6px;
  }

  .tool:disabled {
    color: #9a9a9a;
  }

  .tool.active {
    border-color: #444;
    border-radius: 6px;
    background: linear-gradient(#b9b9b9, #e2e2e2 25%, #cfcfcf 45%, #ececec);
  }

  .drop {
    width: 28px;
  }

  .body {
    flex: 1;
    min-height: 0;
    display: flex;
  }

  .sidebar {
    flex: none;
    width: 322px;
    display: flex;
    flex-direction: column;
    background: #808080;
  }

  .panel-title {
    box-sizing: border-box;
    height: 47px;
    flex: none;
    display: flex;
    align-items: center;
    justify-content: space-between;
    padding: 0 8px 0 4px;
    border: 2px solid #5e5e5e;
    background: linear-gradient(170deg, #fff 20%, #cfcfcf);
    font-size: 21px;
  }

  .fields {
    padding: 10px 13px 6px 11px;
    color: #f2f2f2;
  }

  .field {
    margin-bottom: 7px;
  }

  .field label {
    display: flex;
    justify-content: space-between;
    align-items: center;
    height: 36px;
  }

  .combo {
    position: relative;
    height: 36px;
    margin: 5px 0 0 1px;
  }

  .combo select {
    appearance: none;
    box-sizing: border-box;
    width: 100%;
    height: 36px;
    padding: 0 5px;
    border: 1px solid #f5f5f5;
    border-radius: 4px;
    background: linear-gradient(#fafafa, #e2e2e2 50%, #c9c9c9 52%, #dcdcdc);
    color: #111;
  }

  .combo .tri {
    position: absolute;
    right: 7px;
    top: 14px;
    pointer-events: none;
  }

  .fields h2 {
    font-size: 20px;
    line-height: 24px;
    margin-top: 35px;
    padding-bottom: 6px;
  }

  .tree {
    flex: 1;
    min-height: 0;
    margin: 0 7px 8px;
    background: #fff;
  }

  .tree ul {
    margin: 0;
    padding: 0;
    list-style: none;
  }

  .tree > ul {
    padding-left: 24px;
  }

  .tree li {
    position: relative;
    padding-left: 22px;
  }

  .tree li li {
    padding-left: 23px;
  }

  .tree li ul {
    padding-left: 13px;
  }

  .tree li::before {
    content: "";
    position: absolute;
    left: 0;
    top: 0;
    width: 16px;
    height: 15px;
    border-left: 1px dotted #888;
    border-bottom: 1px dotted #888;
  }

  .tree li:not(:last-child)::after {
    content: "";
    position: absolute;
    left: 0;
    top: 15px;
    bottom: 0;
    border-left: 1px dotted #888;
  }

  .tree > ul > li:first-child::before {
    border-left: 0;
  }

  .node {
    display: flex;
    align-items: center;
    height: 30px;
  }

  .toggle {
    position: absolute;
    z-index: 1;
    left: -8px;
    top: 7px;
    width: 16px;
    height: 16px;
    border: 1px solid #8c8c8c;
    background: #fff;
    line-height: 12px;
  }

  .vsplit {
    flex: none;
    width: 12px;
    display: grid;
    place-items: center;
    background: #d3d3d3;
  }

  .grip {
    width: 66px;
    height: 6px;
    background: repeating-linear-gradient(110deg, #26305c 0 3px, #f2f2f2 3px 7px);
  }

  .vsplit .grip {
    width: 6px;
    height: 66px;
    background: repeating-linear-gradient(160deg, #26305c 0 3px, #f2f2f2 3px 7px);
  }

  main {
    flex: 1;
    min-width: 0;
    display: flex;
    flex-direction: column;
    border-right: 4px solid #f6f6f6;
  }

  .tabs {
    display: flex;
    height: 41px;
    border-bottom: 5px solid #f8f8f8;
  }

  .tab {
    display: flex;
    align-items: center;
    gap: 14px;
    width: 255px;
    padding: 0 0 6px 13px;
    box-sizing: border-box;
    background: #fff;
    font-style: italic;
    font-size: 20px;
    white-space: nowrap;
  }

  .tab-rest {
    flex: 1;
    background: #d3d3d3;
    border-left: 2px solid #808080;
    border-bottom: 3px solid #808080;
    border-bottom-left-radius: 4px;
  }

  .stocks {
    flex: none;
    background: #808080;
    padding-left: 2px;
    border-bottom: 7px solid #f3f3f3;
  }

  .views {
    display: flex;
    height: 96px;
    box-sizing: border-box;
    border-top: 2px solid #747474;
    color: #fafafa;
  }

  .view {
    box-sizing: border-box;
    width: 187px;
    display: flex;
    flex-direction: column;
    align-items: center;
    padding-top: 6px;
    border: 2px solid transparent;
  }

  .view.active {
    margin-top: 4px;
    padding-top: 2px;
    border-color: #3c3c3c;
    border-radius: 6px;
    background: linear-gradient(#646464, #777);
  }

  .hsplit {
    display: grid;
    place-items: center;
    height: 10px;
    background: #d3d3d3;
  }

  .bar {
    display: flex;
    align-items: center;
    gap: 11px;
    height: 43px;
    padding-left: 5px;
  }

  .bar strong {
    color: #fff;
    font-weight: 700;
  }

  .menu {
    display: flex;
    align-items: center;
    gap: 17px;
    padding: 0 5px;
  }

  .menu.numbers {
    gap: 8px;
    padding: 0;
  }

  .menu .tri {
    border-width: 8px 6px 0;
  }

  .filter {
    display: flex;
    align-items: center;
    align-self: stretch;
    gap: 6px;
  }

  .filter .menu {
    padding-right: 0;
  }

  .filter input {
    box-sizing: border-box;
    width: 562px;
    height: 41px;
    padding: 0 6px;
    background: #fff;
  }

  .filter input::placeholder {
    color: #777;
    opacity: 1;
  }

  .only-parts {
    display: grid;
    place-items: center;
    width: 42px;
    height: 38px;
    box-sizing: border-box;
    border: 2px solid #3c3c3c;
    border-radius: 5px;
    background: #707070;
  }

  .grid-row {
    position: relative;
    display: flex;
    background: #fff;
  }

  .grid {
    position: relative;
    flex: 1;
    min-width: 0;
    overflow: hidden;
  }

  .inventory {
    z-index: 1;
    height: 139px;
  }

  .parts {
    height: 220px;
  }

  table {
    table-layout: fixed;
    border-collapse: separate;
    border-spacing: 0;
  }

  th {
    position: sticky;
    z-index: 1;
    top: 0;
    padding: 3px 0 0;
    height: 42px;
    box-sizing: border-box;
    font-weight: normal;
    border-right: 1px solid #dfe1e6;
    border-bottom: 2px solid #d9dbe0;
    background: linear-gradient(#fff 45%, #f4f5f8 50%, #f1f2f5);
  }

  .inventory th {
    height: 48px;
    padding-top: 6px;
  }

  .th {
    display: flex;
    align-items: center;
    gap: 24px;
    padding: 0 10px 0 13px;
    white-space: nowrap;
  }

  .th.right {
    justify-content: flex-end;
    padding-left: 0;
    gap: 23px;
  }

  .th.center {
    justify-content: center;
  }

  .th.lone {
    justify-content: flex-start;
  }

  td {
    height: 32px;
    padding: 0 11px 0 12px;
    box-sizing: border-box;
    white-space: nowrap;
    line-height: 22px;
  }

  .inventory td {
    height: 33px;
  }

  .parts tbody::before {
    content: "";
    display: block;
    height: 4px;
  }

  td.right {
    text-align: right;
  }

  td.center {
    text-align: center;
  }

  td.name {
    padding: 0 0 0 9px;
  }

  td.name div {
    display: flex;
    align-items: center;
    gap: 2px;
  }

  td.name span {
    flex: 1;
    padding-left: 3px;
    line-height: 32px;
  }

  .inventory td.name span {
    line-height: 33px;
  }

  .selected td {
    color: #fff;
    background: #3296fb;
  }

  .selected td.name {
    background: linear-gradient(90deg, #fff 36px, #3296fb 36px);
  }

  .chart-mark {
    position: absolute;
    right: 66px;
    top: 48px;
    width: 172px;
    height: 58px;
  }

  .vscroll {
    flex: none;
    width: 30px;
    display: flex;
    flex-direction: column;
    background: #f0f0f0;
  }

  .step {
    display: grid;
    place-items: center;
    flex: none;
    width: 30px;
    height: 32px;
  }

  .track {
    flex: 1;
    display: grid;
  }

  .thumb {
    display: flex;
    align-items: center;
    justify-content: center;
    gap: 3px;
    border: 2px solid #999;
    border-radius: 2px;
  }

  .vscroll .thumb {
    grid-row: 2;
    flex-direction: column;
    background: linear-gradient(90deg, #f6f6f6, #dcdcdc 50%, #c6c6c6);
  }

  .vscroll .thumb i {
    width: 12px;
    height: 2px;
    background: #555;
  }

  .scroll-row {
    display: flex;
    background: #efefef;
  }

  .corner {
    flex: none;
    width: 30px;
  }

  .hscroll {
    flex: 1;
    display: flex;
    align-items: center;
    height: 32px;
    background: #eee;
  }

  .hscroll .track {
    height: 28px;
    margin: 0 4px;
  }

  .hscroll .thumb {
    grid-column: 2;
    background: linear-gradient(#f4f4f4, #dfdfdf 45%, #c9c9c9 50%, #c2c2c2);
  }

  .hscroll .thumb i {
    width: 2px;
    height: 12px;
    background: #555;
  }

  .status {
    height: 47px;
    gap: 9px;
  }

  .total {
    height: 46px;
    padding-left: 8px;
  }

  .pair {
    display: flex;
    gap: 15px;
  }

  .faded {
    flex: none;
    gap: 9px;
    padding-left: 3px;
    color: #c0c0c0;
  }

  .faded b {
    font-weight: 700;
  }

  .moving {
    position: relative;
    height: 9px;
  }

  .drag-frame {
    position: absolute;
    z-index: 2;
    left: 50%;
    top: -17px;
    width: 566px;
    height: 37px;
    margin-left: -314px;
    box-sizing: border-box;
    border: 3px solid #1010d8;
  }

  .halo {
    position: absolute;
    z-index: 3;
    left: 50%;
    top: -36px;
    width: 60px;
    height: 60px;
    margin-left: -78px;
    border-radius: 50%;
    background: rgba(220, 220, 40, 0.65);
  }

  .cursor {
    position: absolute;
    z-index: 4;
    left: 50%;
    top: -7px;
    width: 24px;
    height: 36px;
    margin-left: -48px;
  }

  .lower {
    flex: none;
    height: 11px;
  }

  .catalog {
    flex: 1;
    min-height: 0;
    display: flex;
    flex-direction: column;
    background: #808080;
  }

  .catalog h2 {
    height: 46px;
    padding-left: 2px;
    font-size: 21px;
    line-height: 46px;
    background: linear-gradient(#fff, #808080);
  }

  .catalog-body {
    flex: 1;
    min-height: 0;
    display: flex;
    gap: 17px;
    padding: 0 5px 0 4px;
  }

  .listing {
    flex: 1;
    min-width: 0;
    display: flex;
    flex-direction: column;
  }

  .icons, .preview-tools {
    display: flex;
    align-items: center;
    gap: 13px;
    height: 43px;
    padding-left: 3px;
  }

  .products {
    background: #fff;
  }

  .products th {
    height: 43px;
    padding-top: 4px;
  }

  .mark {
    position: absolute;
    right: 3px;
    bottom: 4px;
    width: 110px;
    height: 116px;
  }

  .listing .hscroll {
    flex: none;
    height: 30px;
  }

  fieldset {
    box-sizing: border-box;
    width: 393px;
    margin: 10px 0 6px;
    padding: 6px 6px 0;
    border: 3px solid #fff;
    border-radius: 5px;
    color: #fff;
  }

  legend {
    padding: 0 5px;
    margin-left: 3px;
    line-height: 22px;
  }

  .preview-tools {
    height: 45px;
    gap: 10px;
    padding-left: 9px;
    border-bottom: 4px solid #fff;
  }

  .preview-tools button {
    display: flex;
    align-items: center;
    gap: 9px;
  }

  footer {
    display: flex;
    align-items: center;
    gap: 8px;
    box-sizing: border-box;
    height: 46px;
    padding: 0 5px;
    border-top: 3px solid #fff;
    border-bottom: 3px solid #fff;
    background: #f0eaea;
  }

  .resize {
    align-self: flex-end;
    width: 20px;
    height: 20px;
    margin-left: auto;
  }
</style>
